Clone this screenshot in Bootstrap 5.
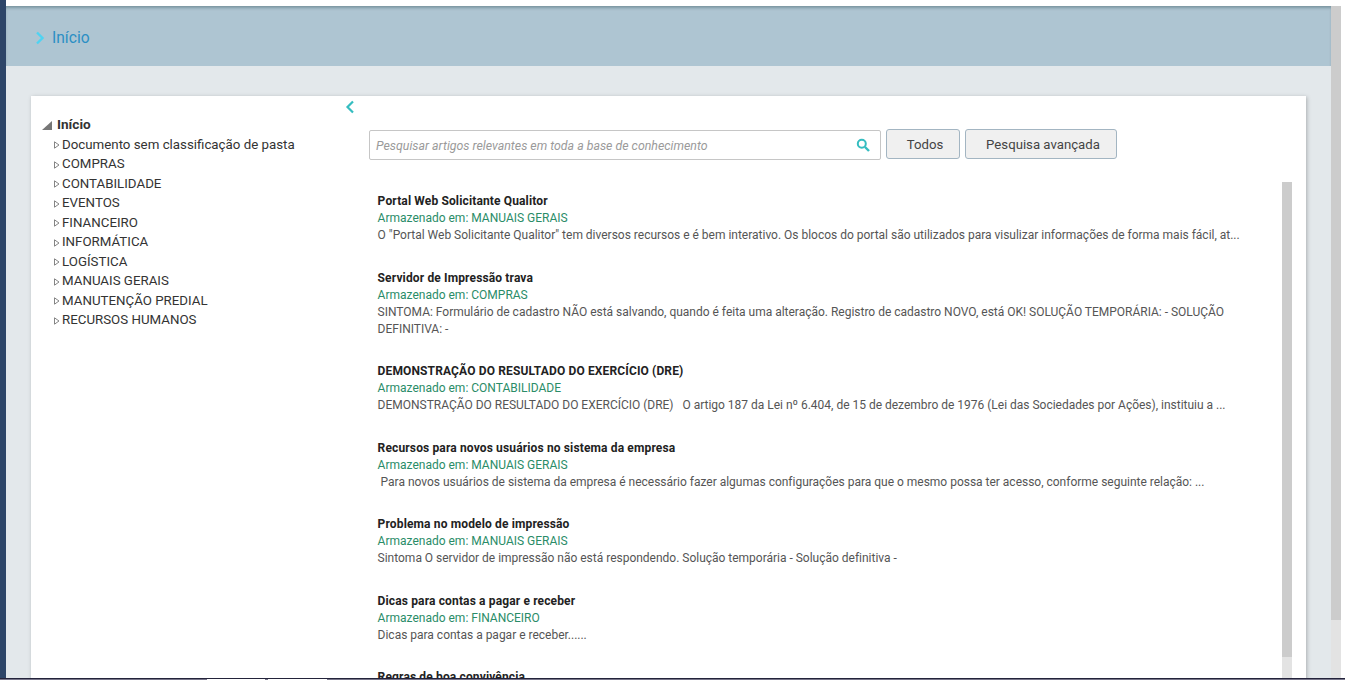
<!doctype html>
<html lang="pt"><head><meta charset="utf-8"><title>Início</title>
<link href="https://cdn.jsdelivr.net/npm/bootstrap@5.3.0/dist/css/bootstrap.min.css" rel="stylesheet">
<style>
html,body{height:680px;overflow:hidden}
body{font-family:Roboto,"Liberation Sans",sans-serif;font-size:13px;background:#fff;color:#333}
.app-frame{height:680px;position:relative}
.side-rail{width:6px;background:#2d4568;flex:none}
.top-strip{height:6px;background:#fff}
.main-area{width:1325px;flex:none;background:#e3e8eb}
.crumb-bar{height:60px;background:#aec5d2;box-shadow:inset 0 3px 3px -1px rgba(60,90,100,.45);padding:4px 0 0 29px}
.crumb-link{font-size:15.6px;color:#2b8fc4;margin:2px 0 0 7px}
.sheet{margin:30px 0 0 25px;width:1275px;height:600px;background:#fff;box-shadow:1px 1px 4px rgba(0,0,0,.25)}
.tree-col{width:338px;padding:19px 0 0 11px;flex:none}
.tree-root{font-weight:700;font-size:13.6px;color:#333;line-height:19.5px;margin-left:5px}
.tree-item{font-size:13.3px;line-height:19.5px;color:#333;margin-left:2px}
.tree-arrow{margin:2px 0 0 4px}
.collapse-mark{left:314px;top:4px}
.right-col{padding:33px 0 0 0}
.search-box{width:512px;height:30px;margin-top:1px;border:1px solid #c6c6c6;border-radius:2px;padding:0 6px;color:#9a9a9a;font-style:italic;font-size:12.35px}
.search-hint{margin-top:2px}
.grey-btn{height:30px;border:1px solid #a3b5c2;border-radius:3px;background:#f0f0f0;color:#444;font-size:13.2px;padding:2px 0 0 4px}
.btn-all{width:74px;margin-left:5px}
.btn-adv{width:152px;margin-left:5px}
.result-pane{margin:22px 0 0 0;padding-left:8.6px;width:923px;height:498px;position:relative;overflow:hidden}
.pane-track{position:absolute;right:0;top:0;width:10px;height:498px;background:#e3e3e3}
.pane-thumb{height:475px;background:#ccc}
.hit{font-size:12px;line-height:17px;margin-bottom:25.5px;width:880px}
.hit:first-of-type{margin-top:11px}
.hit-title{font-weight:700;color:#222;letter-spacing:.14px}
.hit-loc{color:#2a8c68}
.hit-text{color:#555;letter-spacing:-.01px}
.page-track{position:absolute;left:1331px;top:6px;width:10px;height:674px;background:#e3e3e3}
.page-thumb{height:614px;background:#ccc}
.bottom-line{position:absolute;left:0;right:0;bottom:0;height:2px;border-top:1px solid #23233a;background:linear-gradient(90deg,#77758a 207px,#fff 207px,#fff 265px,#77758a 265px,#77758a 268px,#fff 268px,#fff 327px,#77758a 327px)}
</style></head><body>
<div class="app-frame d-flex">
<div class="side-rail"></div>
<div class="main-area">
<div class="top-strip"></div>
<div class="crumb-bar d-flex align-items-center">
<svg width="10" height="14" viewBox="0 0 10 14"><path d="M2 1.5 7.5 7 2 12.5" fill="none" stroke="#4fd3f2" stroke-width="2.4"/></svg>
<span class="crumb-link">Início</span>
</div>
<div class="sheet d-flex position-relative">
<svg class="collapse-mark position-absolute" width="10" height="14" viewBox="0 0 10 14"><path d="M8 1.5 2.5 7 8 12.5" fill="none" stroke="#35bdc0" stroke-width="2.2"/></svg>
<div class="tree-col">
<div class="d-flex align-items-center">
<svg width="10" height="10" viewBox="0 0 10 10"><path d="M10 1V10H0Z" fill="#777"/></svg>
<span class="tree-root">Início</span></div>
<div id="tree"></div>
</div>
<div class="right-col">
<div class="d-flex">
<div class="search-box d-flex align-items-center justify-content-between"><span class="search-hint">Pesquisar artigos relevantes em toda a base de conhecimento</span>
<svg class="me-1" width="14" height="14" viewBox="0 0 14 14"><circle cx="5.8" cy="5.8" r="4" fill="none" stroke="#35bdc0" stroke-width="2"/><path d="M9 9 13 13" stroke="#35bdc0" stroke-width="2.4"/></svg></div>
<button class="grey-btn btn-all align-self-start">Todos</button>
<button class="grey-btn btn-adv align-self-start">Pesquisa avançada</button>
</div>
<div class="result-pane" id="hits">
<div class="pane-track"><div class="pane-thumb"></div></div>
</div>
</div>
</div>
</div>
<div class="page-track"><div class="page-thumb"></div></div>
<div class="bottom-line"></div>
</div>
<script>
var items=["Documento sem classificação de pasta","COMPRAS","CONTABILIDADE","EVENTOS","FINANCEIRO","INFORMÁTICA","LOGÍSTICA","MANUAIS GERAIS","MANUTENÇÃO PREDIAL","RECURSOS HUMANOS"];
document.getElementById('tree').innerHTML=items.map(function(t){return '<div class="d-flex align-items-center ms-2"><svg class="tree-arrow" width="6" height="8" viewBox="0 0 6 8"><path d="M.5.8 5 4 .5 7.2Z" fill="#fff" stroke="#777" stroke-width=".9"/></svg><span class="tree-item">'+t+'</span></div>'}).join('');
var hits=[["Portal Web Solicitante Qualitor","MANUAIS GERAIS","O \"Portal Web Solicitante Qualitor\" tem diversos recursos e é bem interativo. Os blocos do portal são utilizados para visulizar informações de forma mais fácil, at..."],
["Servidor de Impressão trava","COMPRAS","SINTOMA: Formulário de cadastro NÃO está salvando, quando é feita uma alteração. Registro de cadastro NOVO, está OK! SOLUÇÃO TEMPORÁRIA: - SOLUÇÃO DEFINITIVA: -"],
["DEMONSTRAÇÃO DO RESULTADO DO EXERCÍCIO (DRE)","CONTABILIDADE","DEMONSTRAÇÃO DO RESULTADO DO EXERCÍCIO (DRE) &nbsp; O artigo 187 da Lei nº 6.404, de 15 de dezembro de 1976 (Lei das Sociedades por Ações), instituiu a ..."],
["Recursos para novos usuários no sistema da empresa","MANUAIS GERAIS","&nbsp;Para novos usuários de sistema da empresa é necessário fazer algumas configurações para que o mesmo possa ter acesso, conforme seguinte relação: ..."],
["Problema no modelo de impressão","MANUAIS GERAIS","Sintoma O servidor de impressão não está respondendo. Solução temporária - Solução definitiva -"],
["Dicas para contas a pagar e receber","FINANCEIRO","Dicas para contas a pagar e receber......"],
["Regras de boa convivência","",""]];
document.getElementById('hits').insertAdjacentHTML('afterbegin',hits.map(function(h){return '<div class="hit"><div class="hit-title">'+h[0]+'</div>'+(h[1]?'<div class="hit-loc">Armazenado em: '+h[1]+'</div><div class="hit-text">'+h[2]+'</div>':'')+'</div>'}).join(''));
</script>
<script src="https://cdn.jsdelivr.net/npm/bootstrap@5.3.0/dist/js/bootstrap.bundle.min.js"></script>
</body></html>
